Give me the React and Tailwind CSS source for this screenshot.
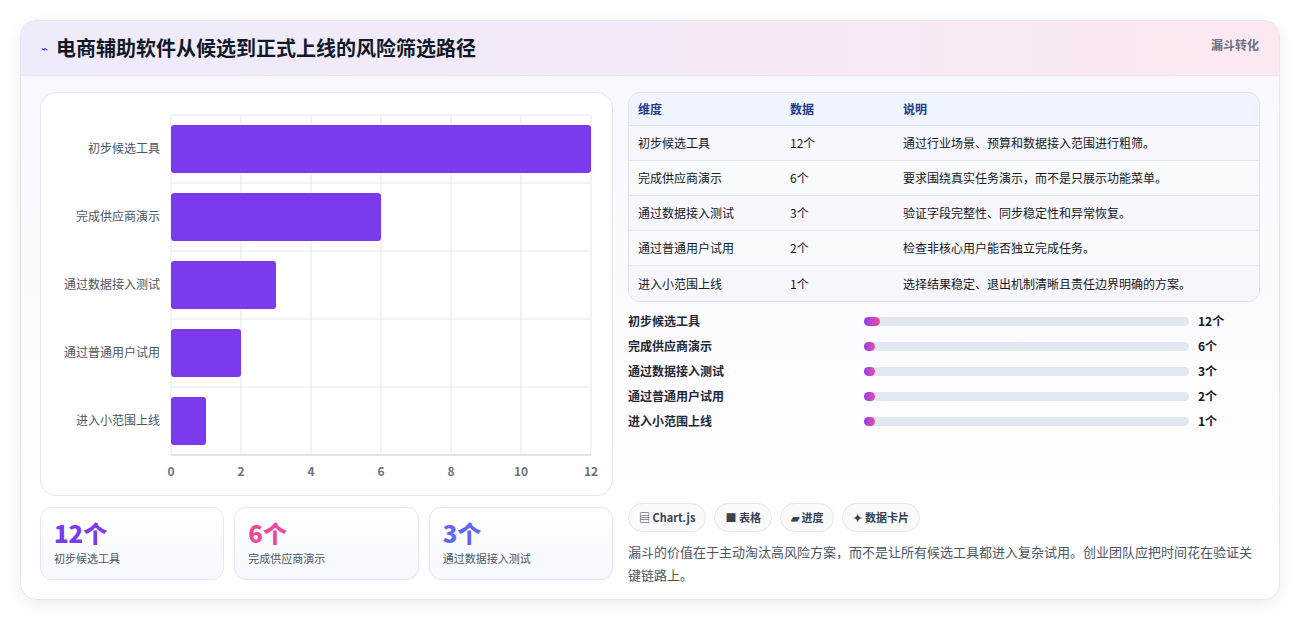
export default function App() {
  const rows = [
    ["初步候选工具", 12, "通过行业场景、预算和数据接入范围进行粗筛。"],
    ["完成供应商演示", 6, "要求围绕真实任务演示，而不是只展示功能菜单。"],
    ["通过数据接入测试", 3, "验证字段完整性、同步稳定性和异常恢复。"],
    ["通过普通用户试用", 2, "检查非核心用户能否独立完成任务。"],
    ["进入小范围上线", 1, "选择结果稳定、退出机制清晰且责任边界明确的方案。"],
  ];
  const font = { fontFamily: '"Noto Sans CJK SC", "Noto Sans", sans-serif' };
  return (
    <div className="w-[1300px] h-[621px] bg-white pt-5 px-5" style={font}>
      <div className="h-[580px] rounded-2xl border border-[#e5e7f0] bg-gradient-to-b from-[#f8f7ff] to-white shadow-[0_4px_16px_rgba(0,0,0,0.08)] overflow-hidden flex flex-col">
        <div className="h-[55px] shrink-0 flex items-center justify-between px-5 bg-gradient-to-r from-[#eeebfb] to-[#fbe8f2] border-b border-[#ebe6f5]">
          <div className="flex items-center gap-2">
            <span className="text-[12px] text-[#4f46e5]">⌁</span>
            <span className="text-[20px] font-bold text-[#111827]">电商辅助软件从候选到正式上线的风险筛选路径</span>
          </div>
          <span className="text-xs font-semibold text-[#6b7280] self-start mt-4">漏斗转化</span>
        </div>
        <div className="flex gap-[15px] px-[19px] pt-[16px]">
          <div className="w-[573px] flex flex-col gap-[11px]">
            <div className="h-[404px] rounded-2xl border border-[#e5e7eb] bg-white">
              <svg width="572" height="404" className="block">
                {[0,2,4,6,8,10,12].map((v,i)=>(
                  <g key={v}>
                    <line x1={130+i*70} x2={130+i*70} y1={22} y2={362} stroke="#e5e7eb" />
                    <text x={130+i*70} y={383} textAnchor="middle" fontSize="12" fill="#6b7280" fontWeight="600">{v}</text>
                  </g>
                ))}
                {[0,1,2,3,4,5].map(i=>(
                  <line key={i} x1={130} x2={550} y1={22+i*68} y2={22+i*68} stroke="#e5e7eb" />
                ))}
                <line x1={130} x2={550} y1={362} y2={362} stroke="#cbd5e1" />
                {rows.map((r,i)=>(
                  <g key={i}>
                    <rect x={130} y={32+i*68} width={r[1]*35} height={48} rx={3} fill="#7c3aed" />
                    <text x={119} y={60+i*68} textAnchor="end" fontSize="12" fill="#4b5563">{r[0]}</text>
                  </g>
                ))}
              </svg>
            </div>
            <div className="grid grid-cols-3 gap-[10px]">
              {[["12个","初步候选工具","text-[#7c3aed]"],["6个","完成供应商演示","text-[#ec4899]"],["3个","通过数据接入测试","text-[#6366f1]"]].map(([n,l,c])=>(
                <div key={l} className="h-[73px] rounded-xl border border-[#e0e7ff] bg-gradient-to-b from-white to-[#f7f8ff] px-[13px] pt-[10px]">
                  <div className={`text-[24px] leading-[30px] font-extrabold ${c}`}>{n}</div>
                  <div className="text-[11px] text-[#4b5563] mt-[2px]">{l}</div>
                </div>
              ))}
            </div>
          </div>
          <div className="flex-1 flex flex-col">
            <div className="rounded-xl border border-[#dbe1ee] overflow-hidden bg-white">
              <div className="h-[33px] flex items-center bg-[#eff4ff] border-b border-[#dbe1ee] text-[12px] font-bold text-[#1e3a8a]">
                <span className="w-[161px] pl-[9px]">维度</span><span className="w-[113px]">数据</span><span>说明</span>
              </div>
              {rows.map((r,i)=>(
                <div key={i} className={`h-[35px] flex items-center text-[12px] text-[#111827] ${i<4?"border-b border-[#e5e7eb]":""} ${i%2?"bg-[#f9fafb]":"bg-[#f8f7fd]"}`}>
                  <span className="w-[161px] pl-[9px]">{r[0]}</span><span className="w-[113px]">{r[1]}个</span><span>{r[2]}</span>
                </div>
              ))}
            </div>
            <div className="flex flex-col gap-[9px] mt-[11px]">
              {rows.map((r,i)=>(
                <div key={i} className="h-[16px] flex items-center text-[12px] font-semibold text-[#1f2937]">
                  <span className="w-[236px]">{r[0]}</span>
                  <div className="w-[325px] h-[9px] rounded-full bg-[#e2e8f0]">
                    <div className="h-full rounded-full bg-gradient-to-r from-[#9333ea] to-[#ec4899]" style={{width: i===0?16:11}} />
                  </div>
                  <span className="ml-[9px] font-bold text-[#111827]">{r[1]}个</span>
                </div>
              ))}
            </div>
            <div className="flex gap-[8px] mt-[74px]">
              {["▤ Chart.js","■ 表格","▰ 进度","✦ 数据卡片"].map(t=>(
                <span key={t} className="h-[29px] px-[10px] flex items-center rounded-full border border-[#e5e7eb] bg-[#fafafa] text-[11px] font-semibold text-[#374151]">{t}</span>
              ))}
            </div>
            <p className="mt-[8px] text-[13px] leading-[23px] text-[#4b5563]">漏斗的价值在于主动淘汰高风险方案，而不是让所有候选工具都进入复杂试用。创业团队应把时间花在验证关键链路上。</p>
          </div>
        </div>
      </div>
    </div>
  );
}
